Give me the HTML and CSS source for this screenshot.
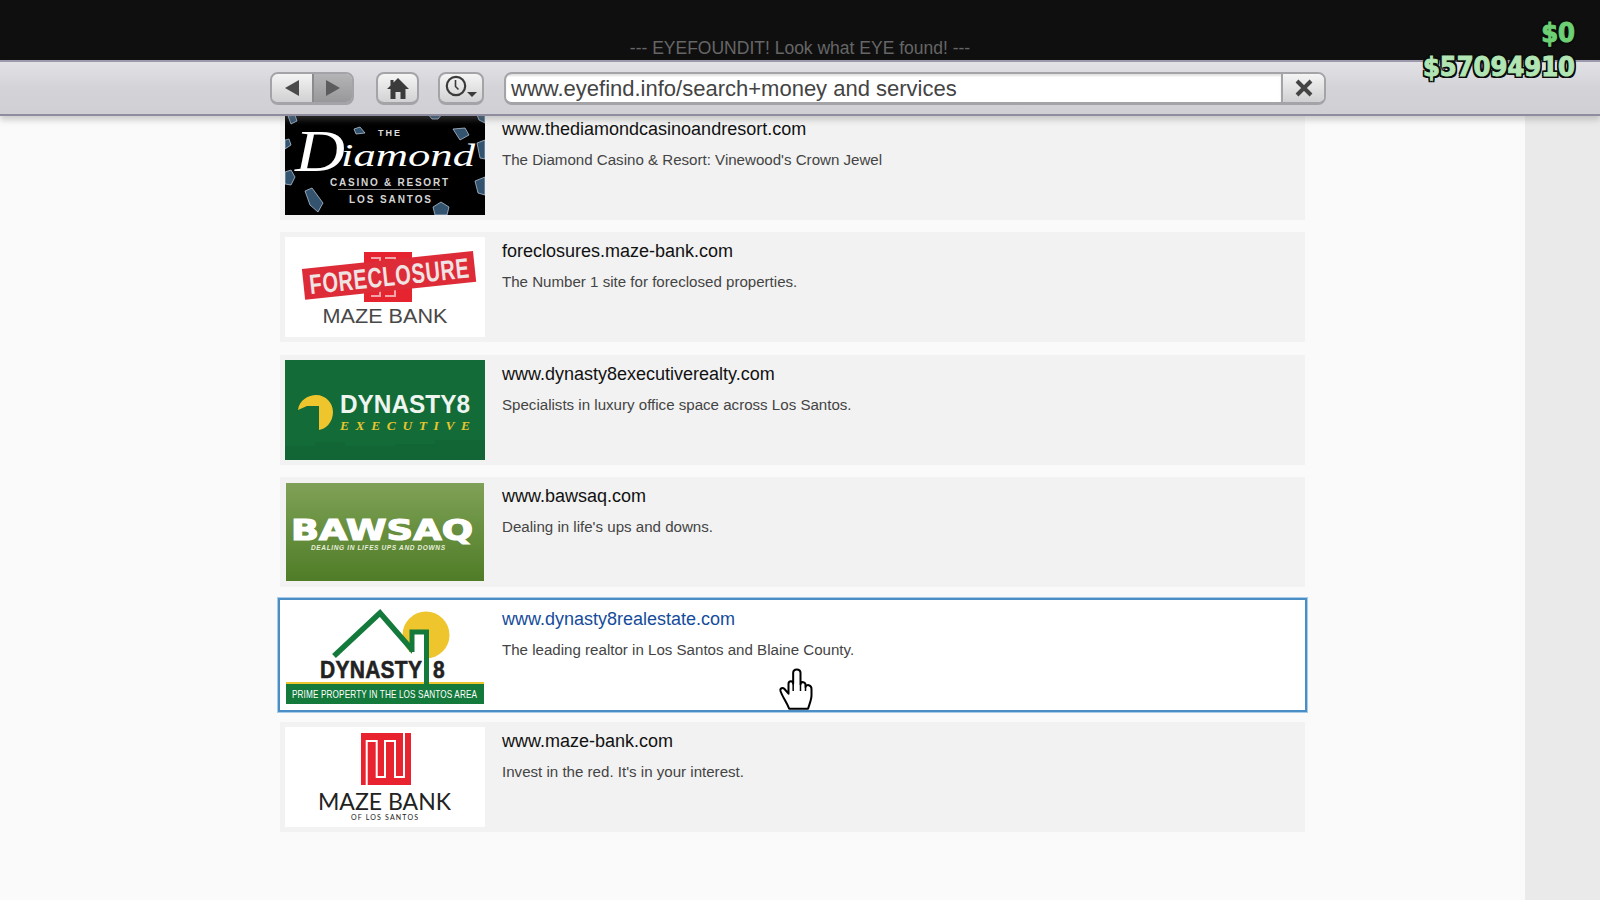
FILE: index.html
```html
<!DOCTYPE html>
<html lang="en">
<head>
  <meta charset="UTF-8">
  <title>Eyefind search</title>
  <link rel="stylesheet" href="styles.css">
</head>
<body>

  <div class="top-bar">
    <div class="top-title">--- EYEFOUNDIT! Look what EYE found! ---</div>
  </div>

  <div class="toolbar">
    <div class="nav-pair">
      <div class="nav-btn nav-back">
        <svg width="16" height="18" viewBox="0 0 16 18"><path d="M15 1V17L1 9Z" fill="#4a4a4a"/></svg>
      </div>
      <div class="nav-btn nav-forward">
        <svg width="16" height="18" viewBox="0 0 16 18"><path d="M1 1V17L15 9Z" fill="#5c5c5c"/></svg>
      </div>
    </div>
    <div class="tool-btn home-btn">
      <svg width="24" height="23" viewBox="0 0 24 23"><path d="M12 1 23 12H19.500V22H14.500V15H9.500V22H4.500V12H1L4.500 8.500V3H7.500V5.500Z" fill="#3b3b3b"/></svg>
    </div>
    <div class="tool-btn history-btn">
      <svg width="36" height="26" viewBox="0 0 36 26">
        <circle cx="13" cy="11" r="9.200" fill="none" stroke="#3b3b3b" stroke-width="2.200"/>
        <path d="M12.500 5V11.500L15.500 14.500" fill="none" stroke="#3b3b3b" stroke-width="1.600"/>
        <path d="M24 17H34L29 22Z" fill="#3b3b3b"/>
      </svg>
    </div>
    <div class="url-box">
      <div class="url-text">www.eyefind.info/search+money and services</div>
      <div class="url-close">
        <svg width="20" height="20" viewBox="0 0 20 20"><path d="M3 3 17 17M17 3 3 17" stroke="#444" stroke-width="4"/></svg>
      </div>
    </div>
  </div>

  <div class="money">
    <div class="cash">$0</div>
    <div class="bank">$57094910</div>
  </div>

  <div class="page">
    <div class="results">

      <div class="result">
        <svg class="logo" viewBox="0 0 200 100">
          <rect width="200" height="100" fill="#000"/>
          <g fill="#33536f" stroke="#c4d6e6" stroke-width=".7">
            <path d="M0 57 6 55 10 62 6 70 0 69Z"/>
            <path d="M20 76 27 73 38 88 33 97 25 90Z"/>
            <path d="M148 92 156 87 164 92 162 100H150Z"/>
            <path d="M168 14 180 13 184 20 175 25Z"/>
            <path d="M192 28 200 25V44L195 43Z"/>
            <path d="M190 66 200 62V80L193 78Z"/>
            <path d="M69 14 75 12 80 18 71 19Z"/>
            <path d="M142 -2 158 -2 153 4 147 4Z"/>
            <path d="M3 1 10 0 12 6 6 9Z"/>
            <path d="M192 0H200V8L194 5Z"/>
            <path d="M0 25 4 24 6 30 0 34Z"/>
          </g>
          <text class="dia-cap" x="10" y="56" textLength="50" lengthAdjust="spacingAndGlyphs">D</text>
          <text class="dia-script" x="56" y="51" textLength="134" lengthAdjust="spacingAndGlyphs">iamond</text>
          <text class="dia-the" x="105" y="21" text-anchor="middle">THE</text>
          <text class="dia-sub" x="104" y="71" textLength="118" text-anchor="middle">CASINO &amp; RESORT</text>
          <rect x="53" y="74" width="102" height="1" fill="#8d8d8d"/>
          <text class="dia-sub" x="105" y="88" textLength="82" text-anchor="middle">LOS SANTOS</text>
        </svg>
        <div class="result-text">
          <div class="result-url">www.thediamondcasinoandresort.com</div>
          <div class="result-desc">The Diamond Casino &amp; Resort: Vinewood's Crown Jewel</div>
        </div>
      </div>

      <div class="result">
        <svg class="logo" viewBox="0 0 200 100">
          <rect width="200" height="100" fill="#fff"/>
          <rect x="79" y="15" width="48" height="50" fill="#e5242f"/>
          <path d="M86 21H95V29M100 21H110V29M86 59H95V51M100 59H110V51" fill="none" stroke="#f1a5a9" stroke-width="2"/>
          <g transform="rotate(-6 103 38)">
            <rect x="18" y="23" width="172" height="31" fill="#dd2c38"/>
            <text class="fc-stamp" transform="translate(104 49) scale(1 1.400)" textLength="160" text-anchor="middle">FORECLOSURE</text>
          </g>
          <text class="fc-maze" x="100" y="86" textLength="125" lengthAdjust="spacingAndGlyphs" text-anchor="middle">MAZE BANK</text>
        </svg>
        <div class="result-text">
          <div class="result-url">foreclosures.maze-bank.com</div>
          <div class="result-desc">The Number 1 site for foreclosed properties.</div>
        </div>
      </div>

      <div class="result">
        <svg class="logo" viewBox="0 0 200 100">
          <rect width="200" height="100" fill="#136b37"/>
          <path d="M0 100V86H30V82H60V86H110V84H150V80H200V100Z" fill="#126534"/>
          <path d="M13 50C14 40 24 35 31 35 41 35 48 43 48 52 48 62 41 69 34 70V46H22Z" fill="#efc52d"/>
          <text class="d8-name" x="55" y="53" textLength="130" lengthAdjust="spacingAndGlyphs">DYNASTY8</text>
          <text class="d8-exec" x="55" y="70" textLength="130" lengthAdjust="spacing">EXECUTIVE</text>
        </svg>
        <div class="result-text">
          <div class="result-url">www.dynasty8executiverealty.com</div>
          <div class="result-desc">Specialists in luxury office space across Los Santos.</div>
        </div>
      </div>

      <div class="result">
        <svg class="logo" viewBox="0 0 200 100">
          <defs>
            <linearGradient id="bawsaqBg" x1="0" y1="0" x2="0" y2="1">
              <stop offset="0" stop-color="#7fa157"/>
              <stop offset="1" stop-color="#4f7c26"/>
            </linearGradient>
          </defs>
          <rect x="1" y="1" width="198" height="98" fill="url(#bawsaqBg)"/>
          <text class="bq-name" x="6" y="58" textLength="182" lengthAdjust="spacingAndGlyphs">BAWSAQ</text>
          <text class="bq-tag" x="26" y="68" textLength="134" lengthAdjust="spacing">DEALING IN LIFES UPS AND DOWNS</text>
        </svg>
        <div class="result-text">
          <div class="result-url">www.bawsaq.com</div>
          <div class="result-desc">Dealing in life's ups and downs.</div>
        </div>
      </div>

      <div class="result result-active">
        <svg class="logo" viewBox="0 0 200 100">
          <rect width="200" height="100" fill="#fff"/>
          <circle cx="141" cy="30" r="23.500" fill="#efc52d"/>
          <path d="M49 51 95 8 129 47" fill="none" stroke="#137a3c" stroke-width="5.500"/>
          <rect x="127" y="27" width="16" height="28" fill="#fff"/>
          <path d="M127 47V27H141.500V80" fill="none" stroke="#137a3c" stroke-width="5"/>
          <text class="dr-name" transform="translate(35 73) scale(1 1.180)" textLength="102">DYNASTY</text>
          <text class="dr-name" transform="translate(148 73) scale(1 1.180)" textLength="15">8</text>
          <rect x="1" y="77" width="198" height="2" fill="#efc52d"/>
          <rect x="1" y="79" width="198" height="20" fill="#137a3c"/>
          <rect x="139" y="74" width="5" height="6" fill="#137a3c"/>
          <text class="dr-tag" transform="translate(7 93) scale(1 1.350)" textLength="185">PRIME PROPERTY IN THE LOS SANTOS AREA</text>
        </svg>
        <div class="result-text">
          <div class="result-url">www.dynasty8realestate.com</div>
          <div class="result-desc">The leading realtor in Los Santos and Blaine County.</div>
        </div>
      </div>

      <div class="result">
        <svg class="logo" viewBox="0 0 200 100">
          <rect width="200" height="100" fill="#fff"/>
          <rect x="76" y="6" width="50" height="52" fill="#e8222e"/>
          <path d="M81.700 58V14H91.700V50H100V14H110V50H119V6" fill="none" stroke="#fff" stroke-width="2"/>
          <text class="mz-name" x="33" y="83" textLength="133" lengthAdjust="spacingAndGlyphs">MAZE BANK</text>
          <text class="mz-sub" x="66" y="93" textLength="67" lengthAdjust="spacing">OF LOS SANTOS</text>
        </svg>
        <div class="result-text">
          <div class="result-url">www.maze-bank.com</div>
          <div class="result-desc">Invest in the red. It's in your interest.</div>
        </div>
      </div>

    </div>
    <div class="sidebar"></div>
  </div>

  <svg class="hand" width="37" height="45" viewBox="115 80 110 135">
    <path d="M148 205C140 185 128 170 122 152 120 144 128 140 134 146L146 160V130C146 120 160 120 160 130V98C160 84 182 84 182 98V132C184 122 197 124 197 134V140C200 130 215 134 215 146V165C215 180 207 195 205 205Z" fill="#fff" stroke="#000" stroke-width="6" stroke-linejoin="round"/>
    <path d="M160 130V152M182 132V152M197 140V152" fill="none" stroke="#000" stroke-width="4.500"/>
  </svg>

</body>
</html>
```

FILE: styles.css
```css
body {
  margin: 0;
  height: 900px;
  overflow: hidden;
  font-family: "Liberation Sans", Arial, sans-serif;
  background-color: #fafafa;
  position: relative;
}

/* black strip over the browser */
.top-bar {
  height: 60px;
  background-color: #0f0f10;
  display: flex;
  justify-content: center;
  align-items: flex-end;
}
.top-title {
  color: #666;
  font-size: 17.500px;
  line-height: 24px;
}

/* toolbar */
.toolbar {
  height: 56px;
  box-sizing: border-box;
  padding: 10px 0 0 270px;
  display: flex;
  align-items: flex-start;
  border-top: 2px solid #9d99ad;
  border-bottom: 2px solid #8f8ca0;
  background: linear-gradient(#e2e2e6, #d3d3d8 50%, #cfcfd4);
  box-shadow: 0 4px 6px rgba(120, 120, 120, 0.35);
  position: relative;
  z-index: 2;
}
.nav-pair {
  display: flex;
  width: 84px;
  height: 33px;
  border: 2px solid #a3a3a8;
  border-bottom-width: 3px;
  border-radius: 8px;
  box-sizing: border-box;
  overflow: hidden;
}
.nav-btn {
  display: flex;
  align-items: center;
  justify-content: center;
}
.nav-back {
  width: 40px;
  background: linear-gradient(#f4f4f4, #d0d0d2);
}
.nav-forward {
  flex: 1;
  border-left: 2px solid #8b8b8f;
  background: linear-gradient(#b4b4b6, #98989b);
}
.tool-btn {
  height: 33px;
  box-sizing: border-box;
  border: 2px solid #a3a3a8;
  border-bottom-width: 3px;
  border-radius: 8px;
  background: linear-gradient(#f5f5f5, #d2d2d4);
  display: flex;
  align-items: center;
  justify-content: center;
}
.home-btn {
  width: 43px;
  margin-left: 22px;
}
.history-btn {
  width: 46px;
  margin-left: 19px;
}
.url-box {
  width: 822px;
  height: 33px;
  margin-left: 20px;
  box-sizing: border-box;
  border: 2px solid #a3a3a8;
  border-bottom-width: 3px;
  border-radius: 8px;
  overflow: hidden;
  display: flex;
  background-color: #fff;
}
.url-text {
  flex: 1;
  padding-left: 5px;
  font-size: 22px;
  line-height: 30px;
  color: #444;
  box-shadow: inset 0 2px 2px rgba(0, 0, 0, 0.12);
}
.url-close {
  width: 41px;
  border-left: 2px solid #a3a3a8;
  background: linear-gradient(#f4f4f4, #d0d0d2);
  display: flex;
  align-items: center;
  justify-content: center;
}

/* money counters, over the toolbar */
.money {
  position: absolute;
  top: 16px;
  right: 25px;
  z-index: 3;
  text-align: right;
  font-family: "DejaVu Sans", sans-serif;
  font-weight: bold;
  font-stretch: condensed;
  font-size: 27px;
  line-height: 34px;
  -webkit-text-stroke: 1px currentColor;
  text-shadow: 2px 0 0 #0b0b0b, -2px 0 0 #0b0b0b, 0 2px 0 #0b0b0b, 0 -2px 0 #0b0b0b,
    2px 2px 0 #0b0b0b, -2px 2px 0 #0b0b0b, 2px -2px 0 #0b0b0b, -2px -2px 0 #0b0b0b;
}
.cash {
  color: #6dd074;
}
.bank {
  color: #b1e6b4;
}

/* results */
.page {
  display: flex;
  height: 784px;
}
.results {
  flex: 1;
  padding: 0 220px 0 280px;
  margin-top: -6px;
  display: flex;
  flex-direction: column;
  gap: 12.400px;
}
.sidebar {
  width: 75px;
  background-color: #eaeaea;
}
.result {
  height: 110px;
  box-sizing: border-box;
  padding: 5px;
  display: flex;
  background-color: #f2f2f2;
}
.result-active {
  background-color: #fff;
  box-shadow: 0 0 0 2px #4b8ec6, 0 0 0 3px #a8cbea;
}
.result-active .result-url {
  color: #154b9b;
}
.logo {
  width: 200px;
  height: 100px;
  flex-shrink: 0;
}
.result-text {
  padding-left: 17px;
}
.result-url {
  font-size: 18px;
  line-height: 22px;
  color: #111;
  margin-top: 3px;
}
.result-desc {
  font-size: 15.100px;
  line-height: 20px;
  color: #444;
  margin-top: 10px;
}

/* cursor */
.hand {
  position: absolute;
  left: 778px;
  top: 667px;
  z-index: 4;
}

/* logo text */
.dia-cap {
  font-family: "Liberation Serif", serif;
  font-style: italic;
  font-size: 60px;
  fill: #fff;
}
.dia-script {
  font-family: "Liberation Serif", serif;
  font-style: italic;
  font-size: 32px;
  fill: #fff;
}
.dia-the {
  font-family: "Liberation Sans", sans-serif;
  font-weight: bold;
  font-size: 9px;
  letter-spacing: 2px;
  fill: #ddd;
}
.dia-sub {
  font-family: "Liberation Sans", sans-serif;
  font-weight: bold;
  font-size: 10px;
  fill: #d5d5d5;
}
.fc-stamp {
  font-family: "Liberation Sans", sans-serif;
  font-weight: bold;
  font-size: 20px;
  fill: #efe3e3;
}
.fc-maze {
  font-family: "Liberation Sans", sans-serif;
  font-size: 20px;
  fill: #484848;
}
.d8-name {
  font-family: "Liberation Sans", sans-serif;
  font-weight: bold;
  font-size: 25px;
  fill: #eef5f0;
}
.d8-exec {
  font-family: "Liberation Serif", serif;
  font-weight: bold;
  font-style: italic;
  font-size: 13.500px;
  fill: #e6c52f;
}
.bq-name {
  font-family: "DejaVu Sans", sans-serif;
  font-weight: bold;
  font-size: 29px;
  fill: #fff;
  stroke: #fff;
  stroke-width: 1.200px;
}
.bq-tag {
  font-family: "Liberation Sans", sans-serif;
  font-style: italic;
  font-weight: bold;
  font-size: 6.500px;
  fill: #e8efdc;
}
.dr-name {
  font-family: "Liberation Sans", sans-serif;
  font-weight: bold;
  font-size: 21px;
  fill: #222;
  stroke: #222;
  stroke-width: .5px;
}
.dr-tag {
  font-family: "Liberation Sans", sans-serif;
  font-size: 8.200px;
  fill: #fff;
}
.mz-name {
  font-family: "Lato", sans-serif;
  font-size: 24px;
  fill: #222;
}
.mz-sub {
  font-family: "Lato", sans-serif;
  font-size: 7px;
  fill: #222;
}
```
